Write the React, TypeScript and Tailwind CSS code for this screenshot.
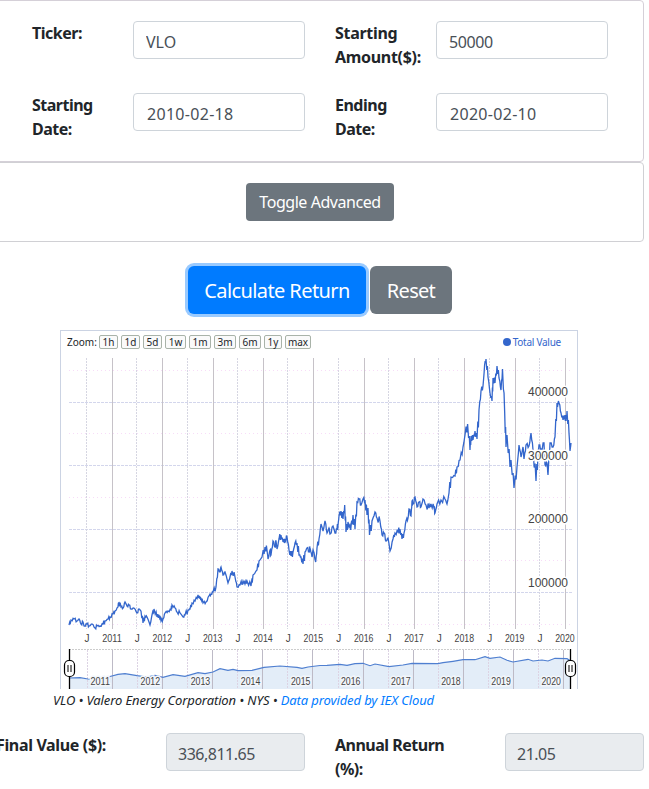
import { useState } from 'react'
import clsx from 'clsx'

type Point = [number, number]

const zoomLevels = ['1h', '1d', '5d', '1w', '1m', '3m', '6m', '1y', 'max']
const zoomWidths = ['w-[19px]', 'w-[19px]', 'w-[19px]', 'w-[21px]', 'w-[22px]', 'w-[22px]', 'w-[22px]', 'w-[18px]', 'w-[26px]']

const years = [2011, 2012, 2013, 2014, 2015, 2016, 2017, 2018, 2019, 2020]

// plot coordinates of the portfolio value
const values: Point[] = [
  [69, 625], [71, 620], [74, 619], [77, 621], [79, 619], [81, 624], [83, 622], [84, 626], [87, 624], [89, 626],
  [92, 624], [95, 628], [97, 626], [100, 626], [103, 624], [105, 621], [108, 619], [110, 617], [113, 614], [115, 611],
  [118, 607], [119, 602], [121, 607], [123, 608], [125, 602], [127, 606], [129, 605], [131, 609], [134, 608], [137, 613],
  [139, 609], [141, 611], [143, 623], [145, 616], [147, 617], [150, 625], [152, 615], [154, 609], [157, 617], [159, 615],
  [161, 621], [163, 619], [165, 613], [168, 611], [171, 610], [172, 605], [175, 608], [177, 612], [180, 613], [183, 617],
  [185, 615], [188, 610], [190, 609], [192, 603], [195, 601], [198, 595], [200, 599], [201, 598], [203, 603], [206, 602],
  [209, 596], [211, 594], [213, 592], [216, 587], [218, 569], [220, 572], [221, 567], [223, 575], [225, 572], [228, 583],
  [230, 577], [232, 571], [235, 577], [237, 587], [240, 585], [243, 581], [245, 584], [247, 581], [251, 586], [253, 575],
  [257, 570], [259, 561], [262, 557], [265, 547], [267, 550], [268, 559], [270, 550], [271, 555], [273, 541], [275, 547],
  [276, 541], [277, 549], [279, 539], [281, 535], [283, 542], [285, 540], [287, 537], [289, 550], [291, 556], [293, 552],
  [295, 543], [297, 543], [299, 555], [301, 557], [303, 564], [305, 552], [307, 548], [309, 551], [310, 548], [312, 557],
  [313, 550], [315.7, 562], [317, 548], [319, 539], [321, 524], [323, 531], [325, 521], [327, 533], [329, 528], [330, 534],
  [333, 526], [335, 533], [337, 529], [338, 525], [339, 516], [341, 511], [343, 519], [344.7, 505], [346, 532], [348, 522],
  [350.7, 530], [353, 515], [355, 529], [357, 502], [359, 499], [361, 505], [363, 499], [365, 500], [367, 515], [368, 508],
  [369.5, 535], [372, 521], [375, 512], [377, 518], [380, 521], [382, 535], [384, 533], [386, 541], [388, 538], [390, 551],
  [393, 539], [395, 533], [398, 532], [400, 529], [402, 539], [404, 533], [406, 521], [408, 518], [409, 509], [411, 516],
  [412, 501], [413, 504], [415, 497], [417, 507], [419, 502], [421, 507], [423, 499], [426, 505], [429, 508], [431, 504],
  [434, 508], [435, 513], [437, 504], [441, 500], [445, 499], [447, 504], [449, 493], [451, 477], [455, 476], [457, 467],
  [460, 460], [463, 447], [465, 435], [467.6, 424], [470, 450], [471, 436], [473, 440], [475, 431], [477, 439], [479, 410],
  [481, 391], [483, 386], [484.6, 365], [486, 359], [488, 377], [490, 393], [492, 401], [493, 378], [495, 383], [497, 366],
  [499, 378], [501, 390], [502.5, 369], [504.7, 413], [506, 447], [507, 435], [510, 467], [511, 460], [514, 488], [517, 467],
  [519, 445], [521, 457], [523, 447], [524, 459], [526, 445], [529, 446], [531, 433], [533, 450], [536, 481], [538, 453],
  [539, 445], [541, 449], [544, 443], [545, 465], [547, 463], [548, 475], [550, 443], [553, 447], [555, 437], [557, 403],
  [559, 403], [561, 413], [563, 420], [565, 415], [566, 421], [567, 411], [569, 433], [570, 451], [571, 443],
]

const overview: Point[] = [
  [69, 678], [80, 677.7], [88, 679], [97, 679.5], [104, 678.5], [110, 676.5], [118, 674.3], [125, 673.7], [137, 675.7],
  [147, 677], [155, 675.3], [163, 677.3], [173, 674.7], [185, 676.3], [198, 672.7], [205, 673.7], [213, 672], [220, 668.7],
  [228, 670.3], [233, 669.3], [238, 670.7], [252, 670.3], [264, 667.3], [280, 666], [297, 667.3], [302, 668.3], [308, 667],
  [320, 665.5], [327, 665.3], [340, 664.3], [347, 665.3], [355, 663.7], [363, 663.3], [370, 665.7], [375, 664], [389, 666.7],
  [403, 665], [412, 663.3], [438, 663.7], [443, 662.7], [453, 661.3], [463, 659.7], [475, 659.7], [485, 656.7], [490, 658.3],
  [500, 657], [507, 660.3], [513, 662], [528, 659.3], [533, 661], [542, 660], [548, 661], [555, 658.3], [567, 658.7], [570.5, 660.7],
]

const toLine = (points: Point[]) => points.map(p => p.join(',')).join(' ')

const withSwings = (points: Point[]) =>
  points.flatMap((p, i): Point[] => {
    const next = points[i + 1]
    if (!next) return [p]
    const swing = (i % 2 ? 1 : -1) * (1 + (i % 3)) * (p[0] > 260 ? 1 : 0.6)
    return [p, [p[0] + (next[0] - p[0]) * 0.4, (p[1] + next[1]) / 2 + swing], [p[0] + (next[0] - p[0]) * 0.7, (p[1] + next[1]) / 2 - swing]]
  })

function Field({ label, value, labelClass, inputClass }: { label: string; value: string; labelClass: string; inputClass?: string }) {
  const [text, setText] = useState(value)
  return (
    <label className="flex items-start">
      <span className={clsx('font-bold leading-6', labelClass)}>{label}</span>
      <input
        value={text}
        onChange={e => setText(e.target.value)}
        className={clsx('h-[38px] w-[172px] rounded border border-[#ced4da] bg-white px-3 pt-[3px] text-[#495057] outline-none', inputClass)}
      />
    </label>
  )
}

function Handle({ x }: { x: number }) {
  return (
    <g stroke="#000">
      <line x1={x} x2={x} y1={649} y2={689} strokeWidth={1.3} />
      <rect x={x - 5} y={660.5} width={10} height={16} rx={4.5} fill="#fff" strokeWidth={1.2} />
      <path d={`M${x - 1.5} 665v7M${x + 1.5} 665v7`} />
    </g>
  )
}

function Chart() {
  return (
    <svg viewBox="61 355 516 334" className="block h-[334px] w-[516px]" fontFamily="'Liberation Sans', Arial, sans-serif">
      {/* Grid */}
      <g fill="none" shapeRendering="crispEdges">
        {[370.5, 433.5, 497.5, 560.5, 624.5].map(y => (
          <line key={y} x1={69} x2={572} y1={y} y2={y} stroke="#f7dcf8" strokeDasharray="1 3" />
        ))}
        {[402.5, 465.5, 529.5, 592.5].map(y => (
          <line key={y} x1={69} x2={572} y1={y} y2={y} stroke="#d3d6ec" strokeDasharray="3 1" />
        ))}
        {years.map((year, i) => (
          <g key={year}>
            <line x1={86.5 + i * 50.33} x2={86.5 + i * 50.33} y1={358} y2={629} stroke="#d6d6e2" strokeDasharray="2 1" />
            <line x1={112.5 + i * 50.33} x2={112.5 + i * 50.33} y1={358} y2={629} stroke="#c6c2c8" />
          </g>
        ))}
      </g>

      <polyline points={toLine(withSwings(values))} fill="none" stroke="#3366cc" strokeWidth={1.3} />

      {/* Value axis */}
      <g fontSize={12} fill="#444" stroke="#fff" strokeWidth={3} paintOrder="stroke" textAnchor="end">
        <text x={568} y={396}>400000</text>
        <text x={568} y={460}>300000</text>
        <text x={568} y={523}>200000</text>
        <text x={568} y={587}>100000</text>
      </g>

      {/* Time axis */}
      <g fontSize={10} fill="#444" textAnchor="middle">
        {years.map((year, i) => (
          <g key={year}>
            <text x={87 + i * 50.33} y={642}>J</text>
            <text x={112 + i * 50.33} y={642} textLength={19.5} lengthAdjust="spacingAndGlyphs">{year}</text>
          </g>
        ))}
      </g>

      {/* Range selector */}
      <polygon points={`69,689 ${toLine(overview)} 570.5,689`} fill="#e3edf8" />
      <g fill="none" shapeRendering="crispEdges">
        <line x1={69} x2={571} y1={649.5} y2={649.5} stroke="#ccc" strokeDasharray="2 1" />
        {years.map((year, i) => (
          <g key={year}>
            <line x1={87.5 + i * 50.1} x2={87.5 + i * 50.1} y1={650} y2={689} stroke="#dcd3e3" strokeDasharray="2 1" />
            <line x1={112.5 + i * 50.1} x2={112.5 + i * 50.1} y1={650} y2={689} stroke="#bdbac6" />
          </g>
        ))}
      </g>
      <polyline points={toLine(overview)} fill="none" stroke="#4f7fd0" strokeWidth={1.2} />
      <g fontSize={10} fill="#444" stroke="#f2f6fb" strokeWidth={3} paintOrder="stroke" textAnchor="end">
        {years.map((year, i) => (
          <text key={year} x={110 + i * 50.1} y={685} textLength={19.5} lengthAdjust="spacingAndGlyphs">{year}</text>
        ))}
      </g>
      <Handle x={69.5} />
      <Handle x={570.5} />
    </svg>
  )
}

export default function App() {
  return (
    <div className="h-[789px] w-[649px] overflow-hidden bg-white font-['Noto_Sans',sans-serif] text-base text-[#212529]">
      {/* Parameters */}
      <div className="-ml-2 h-[162px] w-[652px] rounded border border-[#d5d0d8] pl-[39px] pt-5">
        <div className="grid auto-rows-[38px] grid-cols-[303px_273px] gap-y-[34px]">
          <Field label="Ticker:" value="VLO" labelClass="w-[101px] tracking-[-0.5px]" />
          <Field label="Starting Amount($):" value="50000" labelClass="w-[101px] tracking-[-0.3px]" inputClass="tracking-[-0.4px]" />
          <Field label="Starting Date:" value="2010-02-18" labelClass="w-[101px] pr-6 tracking-[-0.5px]" inputClass="pl-[13px] tracking-[0.3px]" />
          <Field label="Ending Date:" value="2020-02-10" labelClass="w-[101px] pr-6 tracking-[-0.5px]" inputClass="pl-[13px] tracking-[0.3px]" />
        </div>
      </div>
      <div className="-ml-2 flex h-20 w-[652px] justify-center rounded border border-[#d0d0d4] pl-1 pt-5">
        <button className="h-[38px] w-[148px] rounded bg-[#6c757d] tracking-[-0.45px] text-white">Toggle Advanced</button>
      </div>

      {/* Actions */}
      <div className="mt-6 flex gap-1 pl-[188px]">
        <button className="h-12 w-[178px] rounded-md bg-[#007bff] pt-0.5 text-xl tracking-[-0.6px] text-white ring-3 ring-[#99caff]">Calculate Return</button>
        <button className="h-12 w-[82px] rounded-md bg-[#6c757d] pt-0.5 text-xl tracking-[-0.7px] text-white">Reset</button>
      </div>

      {/* Chart */}
      <div className="ml-[60px] mt-4 h-[359px] w-[518px] border border-b-0 border-[#cbd3e3]">
        <div className="mb-0.5 flex h-[22px] items-center justify-between pl-1.5 pr-4 text-[10px]">
          <div className="flex items-center gap-[3px]">
            <span className="w-[29px]">Zoom:</span>
            {zoomLevels.map((level, i) => (
              <button key={level} className={clsx('h-3.5 rounded-xs border border-[#a9b3a9] bg-[#fafafa] text-center leading-3', zoomWidths[i])}>
                {level}
              </button>
            ))}
          </div>
          <div className="flex items-center gap-0.5 tracking-[-0.25px] text-[#3366cc]">
            <span className="size-2 rounded-full bg-[#3366cc]" />
            Total Value
          </div>
        </div>
        <Chart />
      </div>
      <p className="-mt-px ml-[53px] h-6 whitespace-nowrap text-[13px] italic leading-6 tracking-[-0.11px]">
        VLO • Valero Energy Corporation • NYS • <a className="text-[#007bff]">Data provided by IEX Cloud</a>
      </p>

      {/* Results */}
      <div className="mt-[21px] flex items-start">
        <span className="-ml-1 w-[170px] font-bold leading-6 tracking-[-0.35px]">Final Value ($):</span>
        <input readOnly value="336,811.65" className="h-[38px] w-[139px] rounded border border-[#ced4da] bg-[#e9ecef] px-[11px] pt-[3px] tracking-[-0.5px] text-[#495057]" />
        <span className="ml-[30px] w-[170px] pr-10 font-bold leading-6 tracking-[-0.5px]">Annual Return (%):</span>
        <input readOnly value="21.05" className="h-[38px] w-[139px] rounded border border-[#ced4da] bg-[#e9ecef] px-[11px] pt-[3px] tracking-[-0.5px] text-[#495057]" />
      </div>
    </div>
  )
}
